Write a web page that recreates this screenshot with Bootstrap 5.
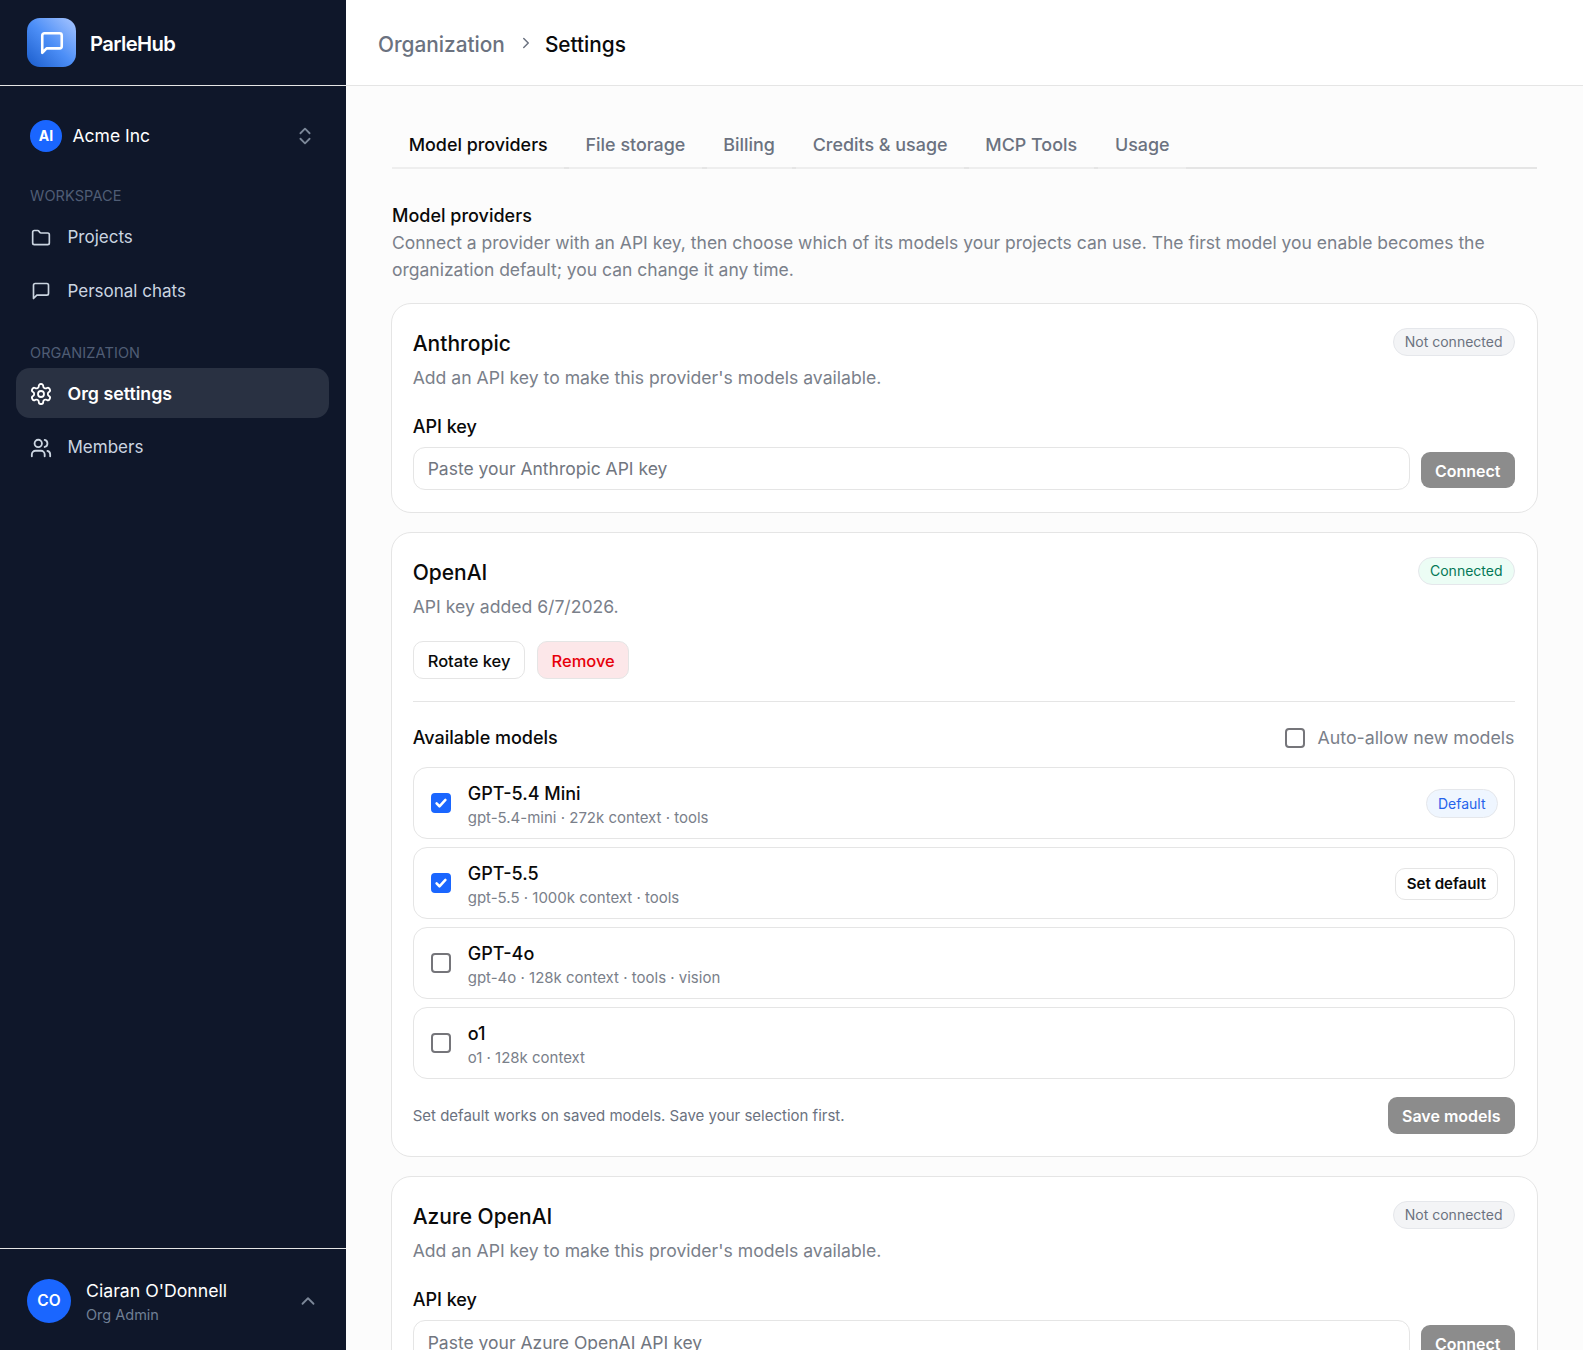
<!DOCTYPE html>
<html lang="en">

<head>
    <meta charset="UTF-8">
    <meta name="viewport" content="width=device-width, initial-scale=1.0">
    <title>ParleHub - Org settings</title>
    <link href="https://cdn.jsdelivr.net/npm/bootstrap@5.3.0/dist/css/bootstrap.min.css" rel="stylesheet">
    <style>
        html, body { height: 100%; overflow: hidden; }

        body {
            font-family: Inter, "Liberation Sans", sans-serif;
            font-size: 17.5px;
            background-color: #fcfcfc;
            color: #0a0a0a;
        }

        .app-shell { height: 1350px; }

        .side {
            width: 346px;
            background-color: #0f172a;
            color: #fff;
        }

        .side-brand { height: 86px; padding-left: 27px; border-bottom: 1px solid #e5e5e5; gap: 14px; }

        .brand-logo {
            width: 49px;
            height: 49px;
            border-radius: 13px;
            background: linear-gradient(to top right, #1a5ccb, #4d8ff7 50%, #a9c6ff);
        }

        .brand-name { font-size: 20.2px; font-weight: 600; letter-spacing: -0.6px; padding-top: 4px; }

        .side-body { padding: 33px 17px 0 16px; }

        .org-row { padding: 0 14px; height: 32px; margin-bottom: 35px; padding-top: 1px; }

        .org-avatar {
            width: 32px;
            height: 32px;
            border-radius: 50%;
            background-color: #1a66ff;
            font-size: 14px;
            font-weight: 700;
        }

        .org-name { margin-left: 10.5px; padding-top: 2px; }
        .org-toggle { margin-right: -1px; }

        .side-label { font-size: 14.5px; color: #4f5d75; padding-left: 14px; line-height: 20px; letter-spacing: 0.1px; }
        .side-label.label-gap { margin-top: 28.5px; }

        .side-link {
            height: 49.5px;
            border-radius: 14px;
            padding-left: 13px;
            padding-top: 3px;
            gap: 14.5px;
            color: #cbd5e1;
            font-size: 17px;
            text-decoration: none;
            margin-top: 4px;
        }

        .side-label + .side-link { margin-top: 5.5px; }
        .side-label.label-gap + .side-link { margin-top: 5px; }

        .side-link.is-active { background-color: #293142; color: #fff; font-weight: 600; font-size: 17.8px; }
        .side-icon { width: 24px; flex-shrink: 0; }

        .side-foot { height: 102px; padding: 2px 27px 0 27px; border-top: 1px solid #e5e5e5; }

        .user-avatar {
            width: 44px;
            height: 44px;
            border-radius: 50%;
            background-color: #1a66ff;
            font-size: 15.5px;
            font-weight: 600;
        }

        .user-info { margin-left: 15px; padding-top: 3px; }
        .user-name { font-size: 17.7px; line-height: 26px; }
        .user-role { font-size: 14.5px; color: #6f7f95; line-height: 22px; }

        .topbar { height: 86px; background-color: #fff; border-bottom: 1px solid #e5e5e5; padding-left: 32px; }
        .crumb { font-size: 20.8px; font-weight: 500; }
        .crumb span { padding-top: 4px; }
        .crumb-muted { color: #6b7280; }
        .crumb-sep { margin: 0 10px 0 12px; }

        .content { padding: 38px 46px 0 46px; }

        .tab-strip { border-bottom: 2px solid #e5e5e5; gap: 4.5px; flex-wrap: nowrap; }

        .tab-strip .nav-link {
            color: #6b7280;
            font-size: 17.9px;
            font-weight: 500;
            height: 45px;
            padding: 0 16.7px;
            line-height: 42px;
            border-bottom: 2px solid #eeeeee;
            margin-bottom: -2px;
        }

        .tab-strip .nav-link.active { color: #0a0a0a; }

        .intro-title { font-size: 18px; font-weight: 500; line-height: 24px; margin-top: 35px; }
        .intro-text { color: #7a808a; font-size: 17.5px; line-height: 27px; margin-top: 1px; margin-bottom: 19.5px; }

        .prov-card {
            border: 1.5px solid #e5e5e5;
            border-radius: 20px;
            background-color: #fff;
            padding: 21px 22.5px 22px 20.7px;
            margin: 0 -1px 19.5px;
        }

        .prov-title { font-size: 21px; font-weight: 500; line-height: 36px; margin: 0; padding-top: 1px; }
        .prov-sub { color: #7a808a; font-size: 17.6px; line-height: 27px; margin-top: 2px; }
        .field-label { font-size: 18px; font-weight: 500; line-height: 24px; margin: 24px 0 8px; }

        .pill {
            font-size: 14px;
            font-weight: 400;
            border-radius: 50rem;
            padding: 0 11px;
            height: 28px;
            line-height: 26px;
            border: 1px solid #e5e7eb;
            margin-top: 3px;
        }

        .pill-muted { background-color: #f3f4f6; color: #6b7280; }
        .pill-ok { background-color: #ecfdf5; color: #047857; }
        .pill-info { background-color: #eff6ff; color: #2563eb; height: 29px; line-height: 27px; margin-top: 0; }

        .key-input {
            height: 43px;
            border: 1px solid #e5e5e5;
            border-radius: 12px;
            font-size: 17.5px;
            padding: 1px 14px 0;
        }

        .key-input::placeholder { color: #71767f; }

        .btn-solid {
            background-color: #8c8c8c;
            color: #fff;
            font-size: 16px;
            font-weight: 600;
            height: 36.5px;
            border: 0;
            border-radius: 9px;
            padding: 1px 14px 0;
        }

        .btn-offset { margin-top: 4px; margin-left: 3px; }

        .btn-soft {
            font-size: 16.5px;
            font-weight: 500;
            height: 38px;
            border: 1px solid #e5e5e5;
            border-radius: 10px;
            padding: 2px 14px 0;
            background-color: #fff;
            color: #0a0a0a;
        }

        .btn-danger-soft { background-color: #fce7e9; color: #e7000b; padding: 2px 13px 0; }
        .btn-mini { font-size: 15.1px; height: 31.5px; padding: 1px 10.5px 0; font-weight: 600; margin-top: 2px; }

        .btn-row { margin-top: 21px; }

        .card-rule { border-top: 1.5px solid #e5e5e5; opacity: 1; margin: 22px 0 24px; }

        .models-head { font-size: 18px; font-weight: 500; line-height: 24px; margin-bottom: 17px; }

        .form-check-input.tick {
            width: 20px;
            height: 20px;
            margin: 0;
            border: 2px solid #75757a;
            border-radius: 4px;
            flex-shrink: 0;
        }

        .form-check-input.tick:checked {
            background-color: #1a66ff;
            border-color: #1a66ff;
            background-image: url("data:image/svg+xml,%3csvg xmlns='http://www.w3.org/2000/svg' viewBox='0 0 20 20'%3e%3cpath fill='none' stroke='%23fff' stroke-linecap='round' stroke-linejoin='round' stroke-width='3.2' d='m4.5 10.5 3.6 3.6 7.4-8'/%3e%3c/svg%3e");
        }

        .auto-label { color: #7a808a; font-size: 17.8px; gap: 12px; }

        .model-row {
            height: 72px;
            border: 1.5px solid #e5e5e5;
            border-radius: 14px;
            padding: 0 16px 0 17px;
            margin-bottom: 8px;
            gap: 17px;
        }

        .model-info { padding-top: 4px; }
        .model-name { font-size: 18px; font-weight: 500; line-height: 24px; }
        .model-meta { font-size: 15px; color: #7a808a; line-height: 21px; margin-top: 1.5px; }

        .foot-note { font-size: 15px; color: #6b7280; padding-top: 2px; }
        .foot-row { margin-top: 18px; }
    </style>
</head>

<body>
    <div class="app-shell d-flex">
        <!-- Sidebar -->
        <aside class="side d-flex flex-column flex-shrink-0">
            <div class="side-brand d-flex align-items-center">
                <div class="brand-logo d-flex align-items-center justify-content-center">
                    <svg width="26" height="26" viewBox="0 0 24 24" fill="none" stroke="#fff" stroke-width="2.4" stroke-linecap="round" stroke-linejoin="round"><path d="M21 15a2 2 0 0 1-2 2H7l-4 4V5a2 2 0 0 1 2-2h14a2 2 0 0 1 2 2z"/></svg>
                </div>
                <span class="brand-name">ParleHub</span>
            </div>

            <div class="side-body flex-grow-1">
                <div class="org-row d-flex align-items-center">
                    <div class="org-avatar d-flex align-items-center justify-content-center">AI</div>
                    <span class="org-name flex-grow-1">Acme Inc</span>
                    <svg class="org-toggle" width="22" height="22" viewBox="0 0 24 24" fill="none" stroke="#7c8798" stroke-width="2" stroke-linecap="round" stroke-linejoin="round"><path d="m7 15 5 5 5-5"/><path d="m7 9 5-5 5 5"/></svg>
                </div>

                <div class="side-label">WORKSPACE</div>
                <a class="side-link d-flex align-items-center" href="#">
                    <span class="side-icon d-flex justify-content-center"><svg width="20" height="20" viewBox="0 0 24 24" fill="none" stroke="currentColor" stroke-width="2" stroke-linecap="round" stroke-linejoin="round"><path d="M20 20a2 2 0 0 0 2-2V8a2 2 0 0 0-2-2h-7.9a2 2 0 0 1-1.69-.9L9.6 3.9A2 2 0 0 0 7.93 3H4a2 2 0 0 0-2 2v13a2 2 0 0 0 2 2Z"/></svg></span>
                    Projects
                </a>
                <a class="side-link d-flex align-items-center" href="#">
                    <span class="side-icon d-flex justify-content-center"><svg width="20" height="20" viewBox="0 0 24 24" fill="none" stroke="currentColor" stroke-width="2" stroke-linecap="round" stroke-linejoin="round"><path d="M21 15a2 2 0 0 1-2 2H7l-4 4V5a2 2 0 0 1 2-2h14a2 2 0 0 1 2 2z"/></svg></span>
                    Personal chats
                </a>

                <div class="side-label label-gap">ORGANIZATION</div>
                <a class="side-link is-active d-flex align-items-center" href="#">
                    <span class="side-icon d-flex justify-content-center"><svg width="24" height="24" viewBox="0 0 24 24" fill="none" stroke="currentColor" stroke-width="1.8" stroke-linecap="round" stroke-linejoin="round"><path d="M12.22 2h-.44a2 2 0 0 0-2 2v.18a2 2 0 0 1-1 1.73l-.43.25a2 2 0 0 1-2 0l-.15-.08a2 2 0 0 0-2.73.73l-.22.38a2 2 0 0 0 .73 2.73l.15.1a2 2 0 0 1 1 1.72v.51a2 2 0 0 1-1 1.74l-.15.09a2 2 0 0 0-.73 2.73l.22.38a2 2 0 0 0 2.73.73l.15-.08a2 2 0 0 1 2 0l.43.25a2 2 0 0 1 1 1.73V20a2 2 0 0 0 2 2h.44a2 2 0 0 0 2-2v-.18a2 2 0 0 1 1-1.73l.43-.25a2 2 0 0 1 2 0l.15.08a2 2 0 0 0 2.73-.73l.22-.39a2 2 0 0 0-.73-2.73l-.15-.08a2 2 0 0 1-1-1.74v-.5a2 2 0 0 1 1-1.74l.15-.09a2 2 0 0 0 .73-2.73l-.22-.38a2 2 0 0 0-2.73-.73l-.15.08a2 2 0 0 1-2 0l-.43-.25a2 2 0 0 1-1-1.73V4a2 2 0 0 0-2-2z"/><circle cx="12" cy="12" r="3"/></svg></span>
                    Org settings
                </a>
                <a class="side-link d-flex align-items-center" href="#">
                    <span class="side-icon d-flex justify-content-center"><svg width="22" height="22" viewBox="0 0 24 24" fill="none" stroke="currentColor" stroke-width="2" stroke-linecap="round" stroke-linejoin="round"><path d="M16 21v-2a4 4 0 0 0-4-4H6a4 4 0 0 0-4 4v2"/><circle cx="9" cy="7" r="4"/><path d="M22 21v-2a4 4 0 0 0-3-3.87"/><path d="M16 3.13a4 4 0 0 1 0 7.75"/></svg></span>
                    Members
                </a>
            </div>

            <div class="side-foot d-flex align-items-center">
                <div class="user-avatar d-flex align-items-center justify-content-center flex-shrink-0">CO</div>
                <div class="user-info flex-grow-1">
                    <div class="user-name">Ciaran O'Donnell</div>
                    <div class="user-role">Org Admin</div>
                </div>
                <svg width="22" height="22" viewBox="0 0 24 24" fill="none" stroke="#7c8798" stroke-width="2" stroke-linecap="round" stroke-linejoin="round"><path d="m18 15-6-6-6 6"/></svg>
            </div>
        </aside>

        <!-- Main -->
        <main class="flex-grow-1 overflow-hidden">
            <div class="topbar d-flex align-items-center crumb">
                <span class="crumb-muted">Organization</span>
                <svg class="crumb-sep" width="18" height="18" viewBox="0 0 24 24" fill="none" stroke="#6b7280" stroke-width="2" stroke-linecap="round" stroke-linejoin="round"><path d="m9 18 6-6-6-6"/></svg>
                <span>Settings</span>
            </div>

            <div class="content">
                <ul class="nav tab-strip">
                    <li class="nav-item"><a class="nav-link active" href="#">Model providers</a></li>
                    <li class="nav-item"><a class="nav-link" href="#">File storage</a></li>
                    <li class="nav-item"><a class="nav-link" href="#">Billing</a></li>
                    <li class="nav-item"><a class="nav-link" href="#">Credits &amp; usage</a></li>
                    <li class="nav-item"><a class="nav-link" href="#">MCP Tools</a></li>
                    <li class="nav-item"><a class="nav-link" href="#">Usage</a></li>
                </ul>

                <div class="intro-title">Model providers</div>
                <p class="intro-text">Connect a provider with an API key, then choose which of its models your projects can use. The first model you enable becomes the organization default; you can change it any time.</p>

                <!-- Anthropic -->
                <section class="prov-card">
                    <div class="d-flex justify-content-between align-items-start">
                        <h2 class="prov-title">Anthropic</h2>
                        <span class="badge pill pill-muted">Not connected</span>
                    </div>
                    <div class="prov-sub">Add an API key to make this provider's models available.</div>
                    <div class="field-label">API key</div>
                    <div class="d-flex align-items-center gap-2">
                        <input class="form-control key-input" type="text" placeholder="Paste your Anthropic API key">
                        <button class="btn btn-solid btn-offset flex-shrink-0">Connect</button>
                    </div>
                </section>

                <!-- OpenAI -->
                <section class="prov-card">
                    <div class="d-flex justify-content-between align-items-start">
                        <h2 class="prov-title">OpenAI</h2>
                        <span class="badge pill pill-ok">Connected</span>
                    </div>
                    <div class="prov-sub">API key added 6/7/2026.</div>
                    <div class="btn-row d-flex gap-2">
                        <button class="btn btn-soft">Rotate key</button>
                        <button class="btn btn-soft btn-danger-soft ms-1">Remove</button>
                    </div>
                    <hr class="card-rule">
                    <div class="models-head d-flex justify-content-between align-items-center">
                        <span>Available models</span>
                        <label class="d-flex align-items-center auto-label fw-normal">
                            <input class="form-check-input tick" type="checkbox">
                            Auto-allow new models
                        </label>
                    </div>

                    <div class="model-row d-flex align-items-center">
                        <input class="form-check-input tick" type="checkbox" checked>
                        <div class="model-info flex-grow-1">
                            <div class="model-name">GPT-5.4 Mini</div>
                            <div class="model-meta">gpt-5.4-mini · 272k context · tools</div>
                        </div>
                        <span class="badge pill pill-info">Default</span>
                    </div>
                    <div class="model-row d-flex align-items-center">
                        <input class="form-check-input tick" type="checkbox" checked>
                        <div class="model-info flex-grow-1">
                            <div class="model-name">GPT-5.5</div>
                            <div class="model-meta">gpt-5.5 · 1000k context · tools</div>
                        </div>
                        <button class="btn btn-soft btn-mini">Set default</button>
                    </div>
                    <div class="model-row d-flex align-items-center">
                        <input class="form-check-input tick" type="checkbox">
                        <div class="model-info flex-grow-1">
                            <div class="model-name">GPT-4o</div>
                            <div class="model-meta">gpt-4o · 128k context · tools · vision</div>
                        </div>
                    </div>
                    <div class="model-row d-flex align-items-center">
                        <input class="form-check-input tick" type="checkbox">
                        <div class="model-info flex-grow-1">
                            <div class="model-name">o1</div>
                            <div class="model-meta">o1 · 128k context</div>
                        </div>
                    </div>

                    <div class="foot-row d-flex justify-content-between align-items-center">
                        <span class="foot-note">Set default works on saved models. Save your selection first.</span>
                        <button class="btn btn-solid">Save models</button>
                    </div>
                </section>

                <!-- Azure OpenAI -->
                <section class="prov-card">
                    <div class="d-flex justify-content-between align-items-start">
                        <h2 class="prov-title">Azure OpenAI</h2>
                        <span class="badge pill pill-muted">Not connected</span>
                    </div>
                    <div class="prov-sub">Add an API key to make this provider's models available.</div>
                    <div class="field-label">API key</div>
                    <div class="d-flex align-items-center gap-2">
                        <input class="form-control key-input" type="text" placeholder="Paste your Azure OpenAI API key">
                        <button class="btn btn-solid btn-offset flex-shrink-0">Connect</button>
                    </div>
                </section>
            </div>
        </main>
    </div>

    <script src="https://cdn.jsdelivr.net/npm/bootstrap@5.3.0/dist/js/bootstrap.bundle.min.js"></script>
</body>

</html>
